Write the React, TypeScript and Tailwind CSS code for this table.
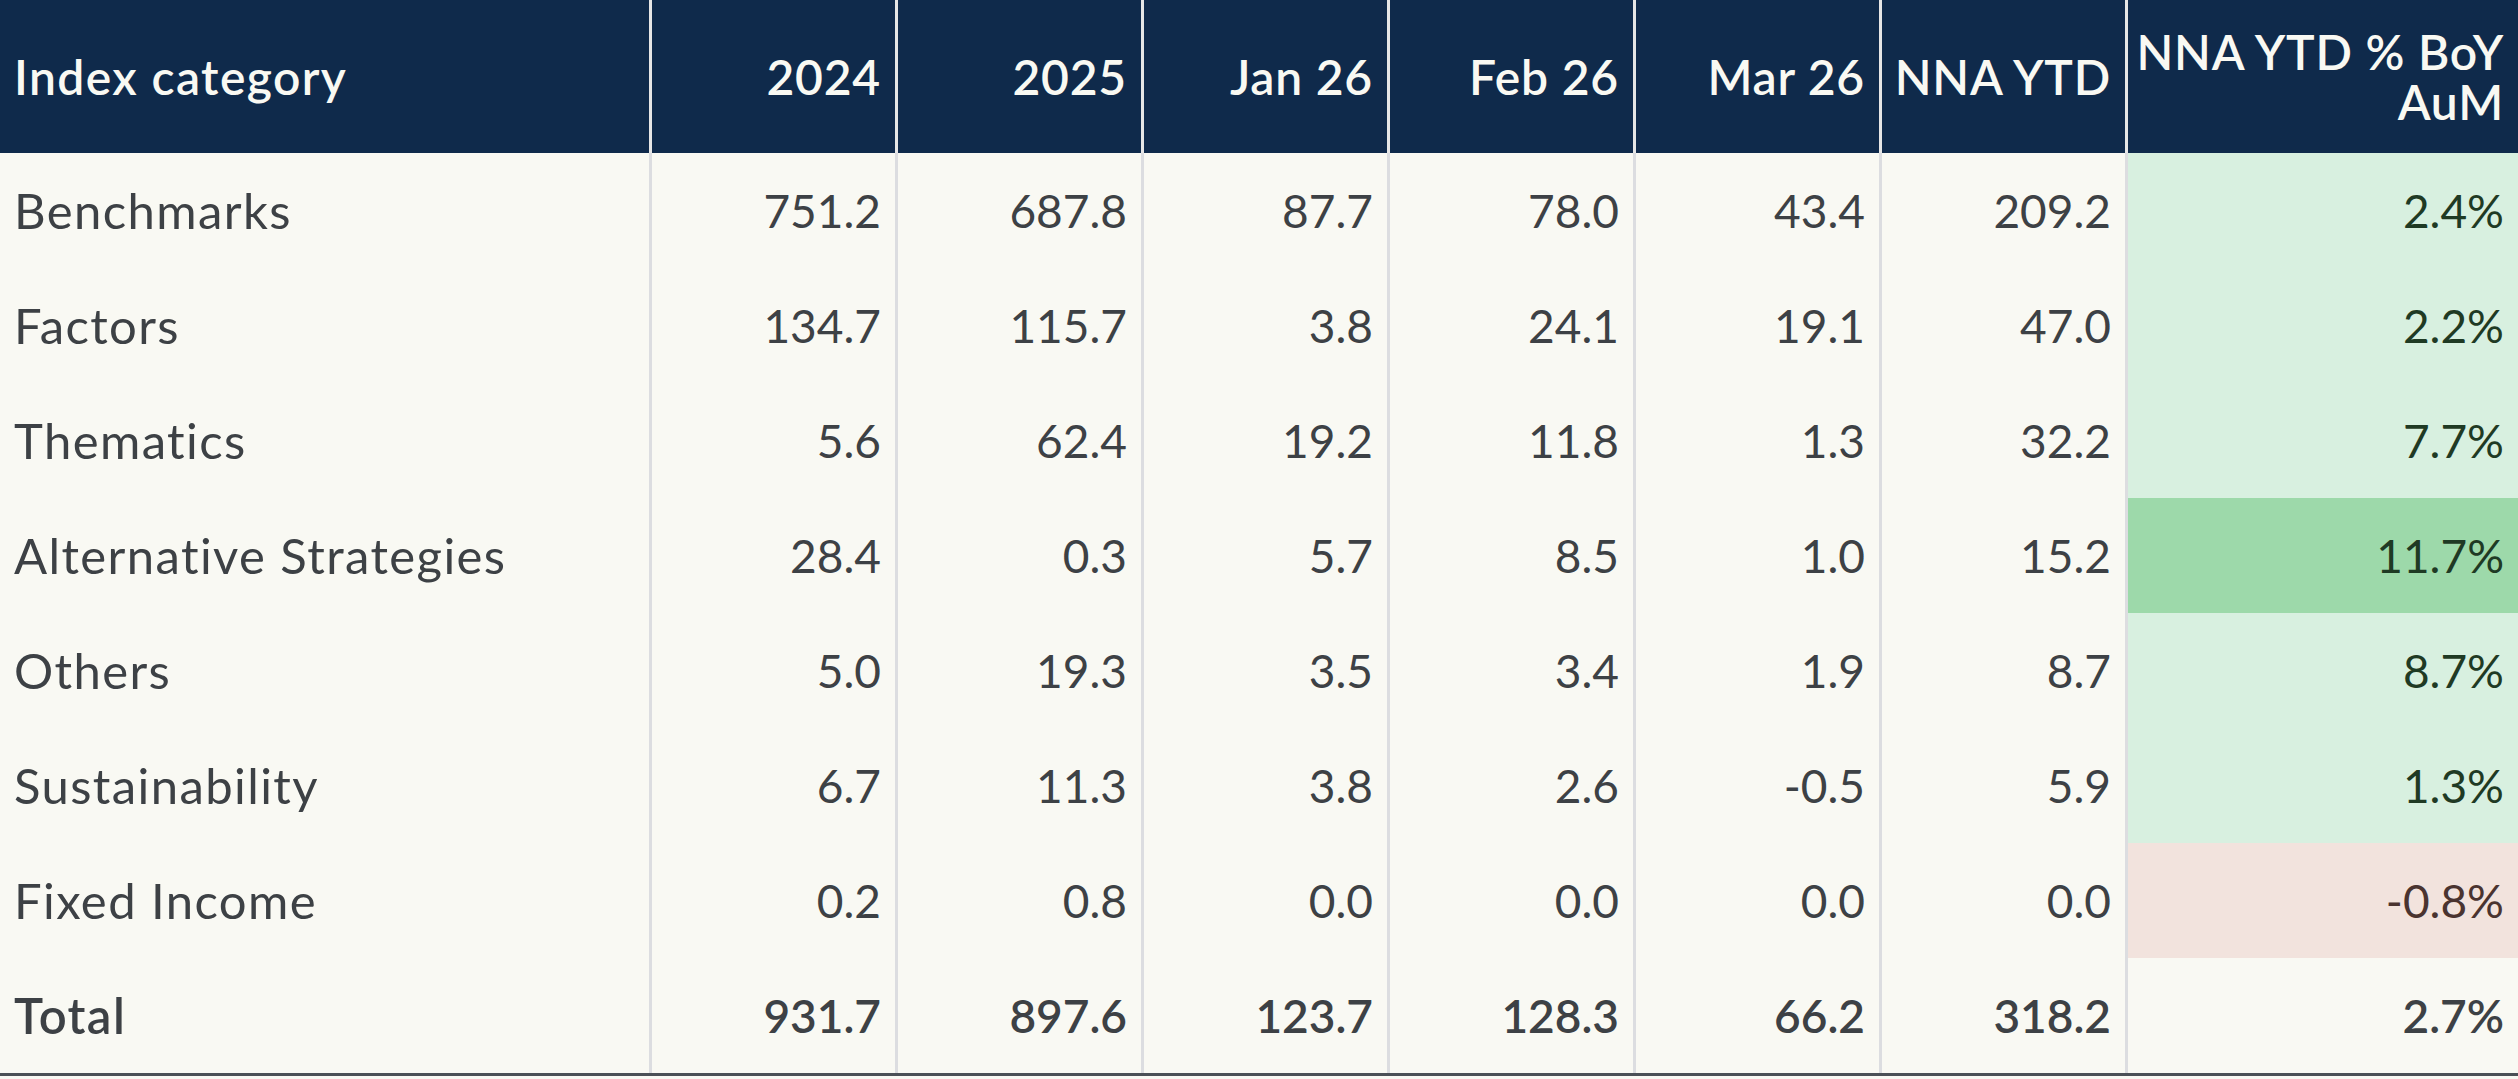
import React from "react";

type Tone = "none" | "light" | "strong" | "red";

const rows: { name: string; vals: string[]; pct: string; tone: Tone }[] = [
  { name: "Benchmarks", vals: ["751.2", "687.8", "87.7", "78.0", "43.4", "209.2"], pct: "2.4%", tone: "light" },
  { name: "Factors", vals: ["134.7", "115.7", "3.8", "24.1", "19.1", "47.0"], pct: "2.2%", tone: "light" },
  { name: "Thematics", vals: ["5.6", "62.4", "19.2", "11.8", "1.3", "32.2"], pct: "7.7%", tone: "light" },
  { name: "Alternative Strategies", vals: ["28.4", "0.3", "5.7", "8.5", "1.0", "15.2"], pct: "11.7%", tone: "strong" },
  { name: "Others", vals: ["5.0", "19.3", "3.5", "3.4", "1.9", "8.7"], pct: "8.7%", tone: "light" },
  { name: "Sustainability", vals: ["6.7", "11.3", "3.8", "2.6", "-0.5", "5.9"], pct: "1.3%", tone: "light" },
  { name: "Fixed Income", vals: ["0.2", "0.8", "0.0", "0.0", "0.0", "0.0"], pct: "-0.8%", tone: "red" },
];

const total = { name: "Total", vals: ["931.7", "897.6", "123.7", "128.3", "66.2", "318.2"], pct: "2.7%" };

const headers = ["2024", "2025", "Jan 26", "Feb 26", "Mar 26", "NNA YTD"];

function toneClass(t: Tone) {
  if (t === "light") return "bg-[#d8f0e0] text-[#1f3a24]";
  if (t === "strong") return "bg-[#9dd9aa] text-[#1f3a24]";
  if (t === "red") return "bg-[#f2e3dd] text-[#4a3430]";
  return "bg-[#f9f9f3] text-[#3d4145]";
}

export default function App() {
  return (
    <div
      className="w-[2518px] h-[1079px] bg-[#f9f9f3] overflow-hidden"
      style={{ fontFamily: "Lato, 'Open Sans', sans-serif" }}
    >
      <div className="grid grid-cols-[652px_repeat(6,246px)_390px] grid-rows-[153px_repeat(8,115px)] border-b-[3px] border-[#4b5056]">
        {/* header */}
        <div className="bg-[#0f2a4b] text-[#f9f9f3] text-[48px] font-semibold tracking-[1.4px] flex items-center pl-[14px] border-r-[3px] border-[#e6e6e6]">
          Index category
        </div>
        {headers.map((h) => (
          <div
            key={h}
            className="bg-[#0f2a4b] text-[#f9f9f3] text-[48px] font-semibold tracking-[0.8px] flex items-center justify-end pr-[14px] border-r-[3px] border-[#e6e6e6] whitespace-nowrap"
          >
            {h}
          </div>
        ))}
        <div className="bg-[#0f2a4b] text-[#f9f9f3] text-[48px] font-semibold tracking-[0.8px] flex items-center justify-end pr-[14px] text-right leading-[50px] whitespace-nowrap">
          <span>
            NNA YTD % BoY
            <br />
            AuM
          </span>
        </div>

        {/* body */}
        {rows.map((r) => (
          <React.Fragment key={r.name}>
            <div className="text-[49px] tracking-[1.4px] text-[#3d4145] flex items-center pl-[14px] border-r-[3px] border-[#dcdde0] whitespace-nowrap">
              {r.name}
            </div>
            {r.vals.map((v, i) => (
              <div
                key={i}
                className="text-[46px] text-[#3d4145] flex items-center justify-end pr-[14px] border-r-[3px] border-[#dcdde0]"
              >
                {v}
              </div>
            ))}
            <div className={`text-[46px] flex items-center justify-end pr-[14px] ${toneClass(r.tone)}`}>
              {r.pct}
            </div>
          </React.Fragment>
        ))}

        {/* total */}
        <div className="text-[49px] tracking-[1.4px] font-semibold text-[#3d4145] flex items-center pl-[14px] border-r-[3px] border-[#dcdde0]">
          {total.name}
        </div>
        {total.vals.map((v, i) => (
          <div
            key={i}
            className="text-[46px] font-semibold text-[#3d4145] flex items-center justify-end pr-[14px] border-r-[3px] border-[#dcdde0]"
          >
            {v}
          </div>
        ))}
        <div className="text-[46px] font-semibold text-[#3d4145] flex items-center justify-end pr-[14px]">
          {total.pct}
        </div>
      </div>
    </div>
  );
}
